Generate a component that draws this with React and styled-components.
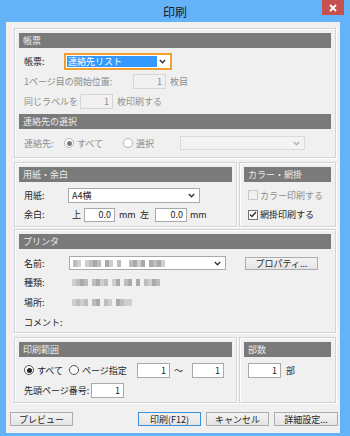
import React from 'react';
import styled, { createGlobalStyle } from 'styled-components';

const GlobalStyle = createGlobalStyle`
  html, body {
    margin: 0;
    padding: 0;
  }
  body {
    width: 350px;
    height: 436px;
    overflow: hidden;
    background: #64b2f8;
    font-family: "Noto Sans CJK JP", "Noto Sans", sans-serif;
    font-size: 9px;
    color: #1e1e1e;
  }
  * { box-sizing: border-box; }
`;

const Window = styled.div`
  width: 350px;
  height: 436px;
  display: flex;
  flex-direction: column;
  background: #64b2f8;
`;

const TitleBar = styled.div`
  height: 22px;
  display: grid;
  grid-template-columns: 1fr auto 1fr;
  align-items: start;
`;

const Title = styled.div`
  grid-column: 2;
  font-size: 12px;
  line-height: 23px;
  color: #1b1b1b;
`;

const CloseButton = styled.div`
  grid-column: 3;
  justify-self: end;
  margin-right: 6px;
  width: 22px;
  height: 15px;
  background: #c75050;
  display: flex;
  align-items: center;
  justify-content: center;
`;

const Panel = styled.div`
  flex: 1;
  margin: 0 10px 3px 6px;
  background: #f0f0f0;
  padding: 6px 4px 0 8px;
  display: flex;
  flex-direction: column;
`;

const GroupBox = styled.div`
  border: 1px solid #d3d3d3;
  box-shadow: inset 1px 1px 0 #fff, 1px 1px 0 #fff;
  padding: 4px 4px ${p => p.$padBottom ?? 4}px;
  margin-top: ${p => p.$mt || 0}px;
  display: flex;
  flex-direction: column;
  width: ${p => (p.$width ? `${p.$width}px` : 'auto')};
  flex: ${p => (p.$grow ? '1' : 'none')};
`;

const Split = styled.div`
  display: flex;
  gap: 2px;
  margin-top: ${p => p.$mt || 0}px;
`;

const Header = styled.div`
  height: 15px;
  line-height: 15px;
  padding: 0 4px;
  background: #7a7a7a;
  color: #ececec;
  font-size: 9px;
  margin-top: ${p => p.$mt || 0}px;
  white-space: nowrap;
`;

const Row = styled.div`
  display: flex;
  align-items: center;
  height: ${p => p.$h || 20}px;
  padding-left: ${p => p.$pl ?? 5}px;
  margin-top: ${p => p.$mt || 0}px;
  white-space: nowrap;
`;

const Label = styled.span`
  width: ${p => (p.$w ? `${p.$w}px` : 'auto')};
  flex: none;
  color: ${p => (p.$disabled ? '#8d8d8d' : '#1e1e1e')};
  margin-left: ${p => p.$ml || 0}px;
`;

const Field = styled.div`
  width: ${p => p.$w}px;
  height: ${p => p.$h || 15}px;
  flex: none;
  border: 1px solid ${p => (p.$disabled ? '#d6d6d6' : '#a9a9a9')};
  background: ${p => (p.$disabled ? '#f0f0f0' : '#fff')};
  color: ${p => (p.$disabled ? '#8d8d8d' : '#1e1e1e')};
  text-align: right;
  padding-right: 3px;
  line-height: ${p => (p.$h || 15) - 2}px;
  margin-left: ${p => p.$ml || 0}px;
`;

const SelectBox = styled.div`
  width: ${p => p.$w}px;
  height: ${p => p.$h || 15}px;
  flex: none;
  display: flex;
  align-items: center;
  border: ${p => (p.$focused ? '2px solid #f0a030' : `1px solid ${p.$disabled ? '#dadada' : '#a9a9a9'}`)};
  background: ${p => (p.$disabled ? '#f3f3f3' : '#fff')};
  padding: 0 4px 0 ${p => (p.$focused ? 1 : 3)}px;
`;

const SelectText = styled.div`
  flex: 1;
  display: flex;
  align-items: center;
  height: 100%;
`;

const Highlight = styled.span`
  background: #3399ff;
  color: #fff;
  line-height: 11px;
  padding: 0 1px;
  width: 90px;
`;

const RadioOption = styled.div`
  width: ${p => p.$w}px;
  flex: none;
  display: flex;
  align-items: center;
  gap: 3px;
  color: ${p => (p.$disabled ? '#8d8d8d' : '#1e1e1e')};
`;

const RadioCircle = styled.span`
  width: 10px;
  height: 10px;
  border-radius: 50%;
  border: 1px solid ${p => (p.$disabled ? '#b5b5b5' : '#555')};
  background: #fff;
  display: flex;
  align-items: center;
  justify-content: center;
  &::after {
    content: '';
    width: 5px;
    height: 5px;
    border-radius: 50%;
    background: ${p => (p.$checked ? (p.$disabled ? '#7a7a7a' : '#222') : 'transparent')};
  }
`;

const CheckOption = styled.div`
  display: flex;
  align-items: center;
  gap: 2px;
  color: ${p => (p.$disabled ? '#8d8d8d' : '#1e1e1e')};
`;

const CheckBox = styled.span`
  width: 10px;
  height: 10px;
  border: 1px solid ${p => (p.$disabled ? '#c8c8c8' : '#707070')};
  background: ${p => (p.$disabled ? '#f0f0f0' : '#fff')};
  display: flex;
  align-items: center;
  justify-content: center;
`;

const Mosaic = styled.div`
  display: flex;
  height: 7px;
  margin-left: ${p => p.$ml || 0}px;
`;

const Tile = styled.span`
  width: 4px;
  height: 7px;
  background: ${p => p.$shade};
`;

const PushButton = styled.div`
  width: ${p => p.$w}px;
  height: ${p => p.$h || 14}px;
  flex: none;
  border: 1px solid ${p => (p.$default ? '#3c8fd8' : '#acacac')};
  background: linear-gradient(#f3f3f3, #e4e4e4);
  display: flex;
  align-items: center;
  justify-content: center;
  margin-left: ${p => p.$ml || 0}px;
  font-size: 9px;
  color: #1e1e1e;
`;

const ButtonBar = styled.div`
  display: flex;
  align-items: center;
  margin: 9px -2px 0 -4px;
  gap: 5px;
`;

const Spacer = styled.div`
  flex: 1;
`;

const shades = { 1: '#a9a9a9', 2: '#bdbdbd', 3: '#cfcfcf', 4: '#dedede', '.': 'transparent' };

const Blur = ({ pattern, ml }) => (
  <Mosaic $ml={ml}>
    {pattern.split('').map((c, i) => (
      <Tile key={i} $shade={shades[c]} />
    ))}
  </Mosaic>
);

const Chevron = ({ color = '#333' }) => (
  <svg width="7" height="5" viewBox="0 0 7 5">
    <path d="M0.8 1 L3.5 3.8 L6.2 1" fill="none" stroke={color} strokeWidth="1.3" />
  </svg>
);

const Select = ({ w, h, focused, disabled, children }) => (
  <SelectBox $w={w} $h={h} $focused={focused} $disabled={disabled}>
    <SelectText>{children}</SelectText>
    <Chevron color={disabled ? '#b0b0b0' : '#333'} />
  </SelectBox>
);

const Radio = ({ w, checked, disabled, children }) => (
  <RadioOption $w={w} $disabled={disabled}>
    <RadioCircle $checked={checked} $disabled={disabled} />
    {children}
  </RadioOption>
);

const Check = ({ checked, disabled, children }) => (
  <CheckOption $disabled={disabled}>
    <CheckBox $disabled={disabled}>
      {checked && (
        <svg width="8" height="7" viewBox="0 0 8 7">
          <path d="M1 3.5 L3 5.5 L7 1" fill="none" stroke="#333" strokeWidth="1.4" />
        </svg>
      )}
    </CheckBox>
    {children}
  </CheckOption>
);

const App = () => (
  <Window>
    <GlobalStyle />
    <TitleBar>
      <Title>印刷</Title>
      <CloseButton>
        <svg width="8" height="8" viewBox="0 0 8 8">
          <path d="M1 1 L7 7 M7 1 L1 7" stroke="#fff" strokeWidth="1.8" />
        </svg>
      </CloseButton>
    </TitleBar>

    <Panel>
      <GroupBox>
        <Header>帳票</Header>
        <Row $mt={3}>
          <Label $w={40}>帳票:</Label>
          <Select w={108} h={17} focused>
            <Highlight>連絡先リスト</Highlight>
          </Select>
        </Row>
        <Row>
          <Label $w={109} $disabled>1ページ目の開始位置:</Label>
          <Field $w={33} $disabled>1</Field>
          <Label $ml={4} $disabled>枚目</Label>
        </Row>
        <Row>
          <Label $w={56} $disabled>同じラベルを</Label>
          <Field $w={33} $disabled>1</Field>
          <Label $ml={4} $disabled>枚印刷する</Label>
        </Row>
        <Header $mt={3}>連絡先の選択</Header>
        <Row $mt={4}>
          <Label $w={40} $disabled>連絡先:</Label>
          <Radio w={59} checked disabled>すべて</Radio>
          <Radio w={57} disabled>選択</Radio>
          <Select w={125} h={14} disabled />
        </Row>
      </GroupBox>

      <Split $mt={4}>
        <GroupBox $width={223} $padBottom={2}>
          <Header>用紙・余白</Header>
          <Row $mt={3}>
            <Label $w={44}>用紙:</Label>
            <Select w={132} h={15}>A4横</Select>
          </Row>
          <Row $h={19}>
            <Label $w={48}>余白:</Label>
            <Label $w={12}>上</Label>
            <Field $w={31} $h={14}>0.0</Field>
            <Label $w={21} $ml={4}>mm</Label>
            <Label $w={15}>左</Label>
            <Field $w={32} $h={14}>0.0</Field>
            <Label $ml={3}>mm</Label>
          </Row>
        </GroupBox>
        <GroupBox $grow $padBottom={2}>
          <Header>カラー・網掛</Header>
          <Row $mt={3} $pl={4}>
            <Check disabled>カラー印刷する</Check>
          </Row>
          <Row $h={19} $pl={4}>
            <Check checked>網掛印刷する</Check>
          </Row>
        </GroupBox>
      </Split>

      <GroupBox $mt={2} $padBottom={0}>
        <Header>プリンタ</Header>
        <Row $mt={4}>
          <Label $w={45}>名前:</Label>
          <Select w={157} h={14}>
            <Blur pattern="23.3212.13.2..2131.1213" />
          </Select>
          <PushButton $w={73} $h={13} $ml={19}>プロパティ...</PushButton>
        </Row>
        <Row $h={19}>
          <Label $w={48}>種類:</Label>
          <Blur pattern="3212.2132.31.21.1.2312" />
        </Row>
        <Row>
          <Label $w={48}>場所:</Label>
          <Blur pattern="3232.21.23.1233" />
        </Row>
        <Row>
          <Label>コメント:</Label>
        </Row>
      </GroupBox>

      <Split $mt={4}>
        <GroupBox $width={223} $padBottom={2}>
          <Header>印刷範囲</Header>
          <Row $mt={3}>
            <Radio w={45} checked>すべて</Radio>
            <Radio w={68}>ページ指定</Radio>
            <Field $w={33} $h={15}>1</Field>
            <Label $w={18} $ml={4}>〜</Label>
            <Field $w={32} $h={15}>1</Field>
          </Row>
          <Row>
            <Label $w={67}>先頭ページ番号:</Label>
            <Field $w={33} $h={15}>1</Field>
          </Row>
        </GroupBox>
        <GroupBox $grow $padBottom={2}>
          <Header>部数</Header>
          <Row $mt={3} $pl={4}>
            <Field $w={33} $h={15}>1</Field>
            <Label $ml={5}>部</Label>
          </Row>
        </GroupBox>
      </Split>

      <ButtonBar>
        <PushButton $w={63}>プレビュー</PushButton>
        <Spacer />
        <PushButton $w={63} $default>印刷(F12)</PushButton>
        <PushButton $w={63}>キャンセル</PushButton>
        <PushButton $w={64}>詳細設定...</PushButton>
      </ButtonBar>
    </Panel>
  </Window>
);

export default App;
